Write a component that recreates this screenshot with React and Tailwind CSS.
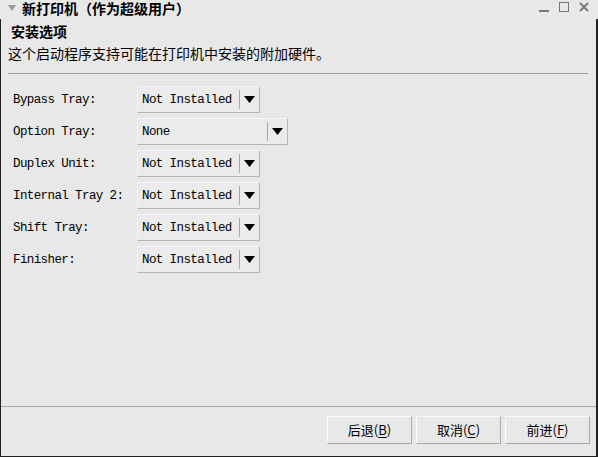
import React from "react";

const cjk = "font-['Noto_Sans_CJK_SC','Noto_Sans',sans-serif]";
const mono = "font-['Liberation_Mono','DejaVu_Sans_Mono',monospace]";

const options = [
  { label: "Bypass Tray:", value: "Not Installed", width: "w-[123px]" },
  { label: "Option Tray:", value: "None", width: "w-[151px]" },
  { label: "Duplex Unit:", value: "Not Installed", width: "w-[123px]" },
  { label: "Internal Tray 2:", value: "Not Installed", width: "w-[123px]" },
  { label: "Shift Tray:", value: "Not Installed", width: "w-[123px]" },
  { label: "Finisher:", value: "Not Installed", width: "w-[123px]" },
];

const Combo = ({ value, width }) => (
  <div
    className={`${width} h-[27px] flex items-center border border-t-[#f6f6f6] border-l-[#f6f6f6] border-r-[#b4b4b4] border-b-[#b4b4b4] bg-[#ebebeb]`}
  >
    <span className={`flex-1 pl-[4px] pt-px text-[12.5px] tracking-[-0.6px] text-black ${mono}`}>
      {value}
    </span>
    <span className="w-px h-[19px] bg-[#a8a8a8]" />
    <span className="w-[19px] flex justify-center">
      <svg width="11" height="7" viewBox="0 0 11 7">
        <path d="M0 0h11L5.5 7z" fill="#000" />
      </svg>
    </span>
  </div>
);

const Button = ({ text, mnemonic }) => (
  <button
    className={`w-[85px] h-[28px] flex items-center justify-center border border-t-[#fafafa] border-l-[#fafafa] border-r-[#a9a9a9] border-b-[#a9a9a9] bg-[#e8e8e8] text-[13px] text-black ${cjk}`}
  >
    {text}(<span className="underline underline-offset-2">{mnemonic}</span>)
  </button>
);

export default function App() {
  return (
    <div className="w-[598px] h-[457px] bg-[#e8e8e8] flex flex-col overflow-hidden">
      {/* title bar */}
      <div className="h-[19px] flex items-start shrink-0">
        <svg className="ml-[8px] mt-[5px]" width="8" height="6" viewBox="0 0 8 6">
          <path d="M0 0h8L4 6z" fill="#9a9a9a" />
        </svg>
        <span
          className={`ml-[6px] text-[14px] font-bold text-black leading-[16px] ${cjk}`}
        >
          新打印机（作为超级用户）
        </span>
        <div className="ml-auto mr-[9px] mt-[2px] flex items-center gap-[10px]">
          <svg width="10" height="10" viewBox="0 0 10 10">
            <rect x="0" y="8" width="10" height="2" fill="#777" />
          </svg>
          <svg width="10" height="10" viewBox="0 0 10 10">
            <rect x="0.5" y="0.5" width="9" height="9" fill="none" stroke="#777" />
          </svg>
          <svg width="10" height="10" viewBox="0 0 10 10">
            <path d="M1 1l8 8M9 1l-8 8" stroke="#777" strokeWidth="2" />
          </svg>
        </div>
      </div>

      {/* body */}
      <div className="flex-1 flex flex-col border-l border-r-2 border-b border-[#222]">
        <div className="px-[7px] pt-[3px]">
          <div className={`pl-[3px] text-[14px] font-bold leading-[18px] text-black ${cjk}`}>
            安装选项
          </div>
          <div className={`mt-[3px] text-[14px] leading-[20px] text-black ${cjk}`}>
            这个启动程序支持可能在打印机中安装的附加硬件。
          </div>
          <div className="mt-[10px] h-px w-[580px] bg-[#a0a0a0]" />
        </div>

        <div className="pt-[12px] flex flex-col gap-[5px]">
          {options.map((o) => (
            <div key={o.label} className="flex items-center">
              <span className={`w-[136px] pl-[12px] pt-px text-[12.5px] tracking-[-0.6px] text-black ${mono}`}>
                {o.label}
              </span>
              <Combo value={o.value} width={o.width} />
            </div>
          ))}
        </div>

        <div className="mt-auto border-t border-[#a8a8a8] h-[50px] flex items-start justify-end gap-[4px] pt-[9px] pr-[6px]">
          <Button text="后退" mnemonic="B" />
          <Button text="取消" mnemonic="C" />
          <Button text="前进" mnemonic="F" />
        </div>
      </div>
    </div>
  );
}
